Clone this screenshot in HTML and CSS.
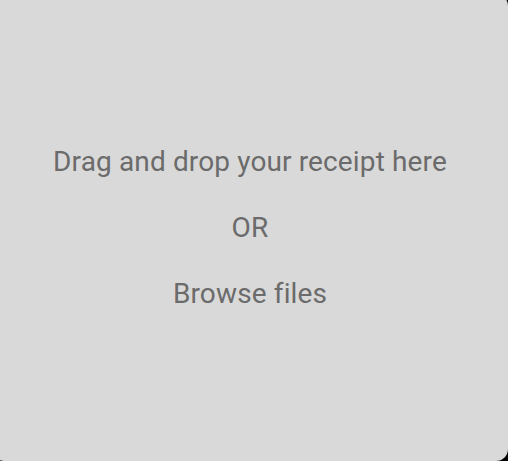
FILE: index.html
```html
<!DOCTYPE html>
<html>
<head>
<meta charset="utf-8">
<link rel="stylesheet" href="styles.css">
</head>
<body>
<div class="drop">
  <p class="line">Drag and drop your receipt here</p>
  <p class="line">OR</p>
  <p class="line">Browse files</p>
</div>
</body>
</html>
```
FILE: styles.css
```css
html, body {
  margin: 0;
  padding: 0;
  background: #000;
  overflow: hidden;
}
.drop {
  margin: -6px 0 0 -8px;
  width: 516px;
  height: 467px;
  border-radius: 12px;
  background: #d9d9d9;
  display: flex;
  flex-direction: column;
  align-items: center;
  justify-content: center;
  gap: 38px;
  font-family: Roboto, "Liberation Sans", sans-serif;
  font-size: 28px;
  letter-spacing: 0.13px;
  color: #6b6b6b;
}
.line {
  margin: 0;
  line-height: 28px;
}
```
